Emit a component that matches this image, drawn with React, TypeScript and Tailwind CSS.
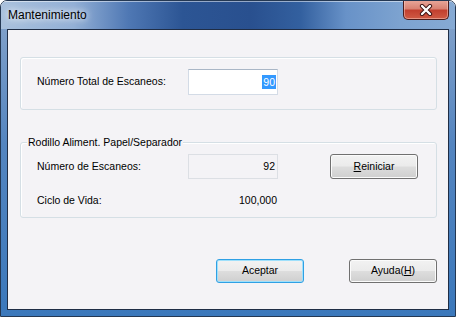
import React from 'react'

const btn =
  'h-[24px] w-[88px] rounded-[3px] border text-[10.5px] text-black flex items-center justify-center bg-[linear-gradient(to_bottom,#f2f2f2_0%,#ebebeb_48%,#dddddd_52%,#cfcfcf_100%)]'

function CloseButton() {
  return (
    <div className="mt-[-1px] flex h-[20px] w-[46px] items-center justify-center rounded-b-[5px] border border-t-0 border-[#4b1c1c] bg-[linear-gradient(to_bottom,#e9a99c_0%,#d98273_45%,#c2402f_55%,#cf5b45_100%)] shadow-[inset_0_0_0_1px_rgba(255,220,210,0.45)]">
      <svg width="14" height="12" viewBox="0 0 14 12">
        <path d="M3 2 L11 10 M11 2 L3 10" stroke="#3a1010" strokeWidth="4.2" strokeLinecap="round" />
        <path d="M3 2 L11 10 M11 2 L3 10" stroke="#ffffff" strokeWidth="2.4" strokeLinecap="round" />
      </svg>
    </div>
  )
}

export default function App() {
  return (
    <div
      className="flex h-[317px] w-[456px] flex-col overflow-hidden rounded-t-[7px] border border-[#243853] text-black"
      style={{ fontFamily: '"Liberation Sans", Arial, sans-serif' }}
    >
      {/* Title bar */}
      <div className="flex h-[28px] shrink-0 items-start justify-between bg-[linear-gradient(to_right,#a9c1dd_0%,#93b0d6_16%,#4f78b4_28%,#2c5594_40%,#29508f_55%,#33609f_66%,#6892c8_76%,#7da3d0_88%,#86aad4_100%)] pr-[6px] shadow-[inset_0_1px_0_rgba(255,255,255,0.5)]">
        <span className="ml-[7px] mt-[7px] text-[12px] leading-[15px] text-black [text-shadow:0_0_6px_rgba(255,255,255,0.95),0_0_10px_rgba(255,255,255,0.8)]">
          Mantenimiento
        </span>
        <CloseButton />
      </div>

      {/* Body with side frames */}
      <div className="flex flex-1 flex-col bg-[linear-gradient(to_bottom,#7e9fc9_0%,#5485c0_40%,#3b78bb_100%)] px-[6px] pb-[7px]">
        <div className="h-[281px] border border-[#1f2d45] bg-[#f4f3f6] pl-[12px] pt-[27px] text-[10.5px]">
          {/* Total scans group */}
          <div className="flex h-[53px] w-[417px] rounded-[3px] border border-[#d5dfe5] pt-[11px] pl-[16px] shadow-[inset_1px_1px_0_#ffffff]">
            <div className="flex h-[26px] items-center">
              <span className="w-[151px]">Número Total de Escaneos:</span>
              <div className="flex h-[26px] w-[90px] items-center justify-end border border-[#d3dbe6] border-t-[#a9b6c6] bg-white pr-[1px]">
                <span className="bg-[#3399ff] px-[1px] leading-[14px] text-white">90</span>
              </div>
            </div>
          </div>

          {/* Roller group */}
          <div className="relative mt-[32px] h-[76px] w-[417px] rounded-[3px] border border-[#d5dfe5] pl-[16px] pt-[11px] shadow-[inset_1px_1px_0_#ffffff]">
            <span className="absolute left-[6px] top-[-8px] bg-[#f4f3f6] px-[1px] leading-[14px]">
              Rodillo Aliment. Papel/Separador
            </span>
            <div className="flex h-[25px] items-center">
              <span className="w-[151px]">Número de Escaneos:</span>
              <div className="flex h-[25px] w-[90px] items-center justify-end border border-[#dcdfe4] pr-[2px]">
                92
              </div>
              <button className={`${btn} ml-[52px] h-[25px] border-[#707070] shadow-[inset_0_0_0_1px_#fbfbfb]`}>
                <span>
                  <span className="underline">R</span>einiciar
                </span>
              </button>
            </div>
            <div className="mt-[9px] flex h-[25px] items-center">
              <span className="w-[151px]">Ciclo de Vida:</span>
              <span className="w-[90px] pr-[1px] text-right">100,000</span>
            </div>
          </div>

          {/* Dialog buttons */}
          <div className="mt-[41px] flex gap-[45px] pl-[196px]">
            <button className={`${btn} w-[87px] border-[#2fa0e4] shadow-[inset_0_0_0_1px_#9fe0fb]`}>Aceptar</button>
            <button className={`${btn} border-[#707070] shadow-[inset_0_0_0_1px_#fbfbfb]`}>
              <span>
                Ayuda(<span className="underline">H</span>)
              </span>
            </button>
          </div>
        </div>
      </div>
    </div>
  )
}
